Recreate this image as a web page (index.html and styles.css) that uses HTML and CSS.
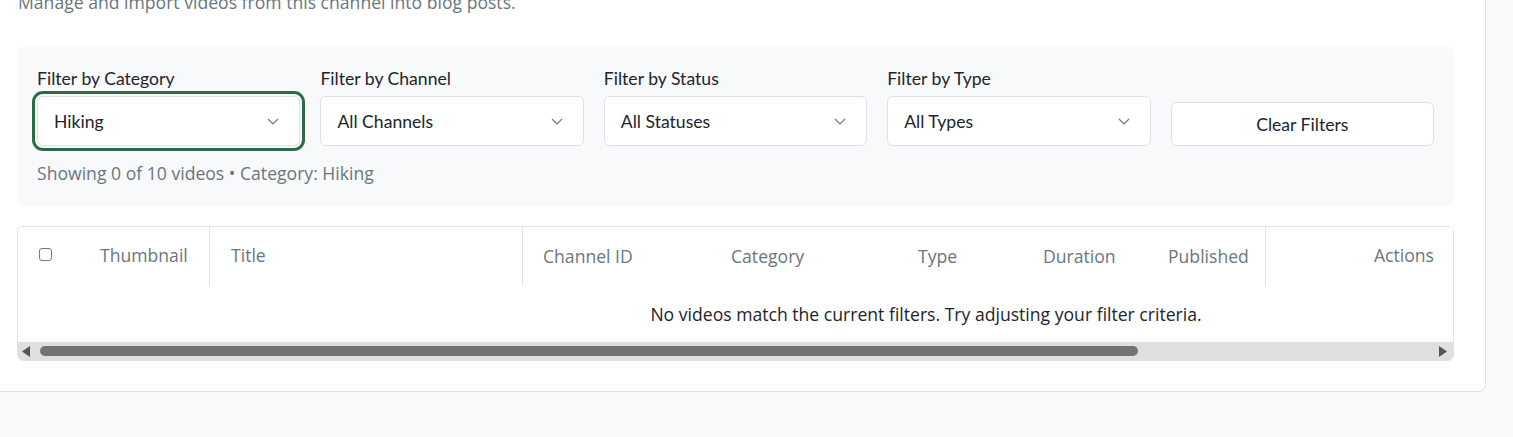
FILE: index.html
```html
<!DOCTYPE html>
<html lang="en">
<head>
<meta charset="utf-8">
<title>Channel Videos</title>
<link rel="stylesheet" href="styles.css">
</head>
<body>
<div class="card">
  <p class="subtitle">Manage and import videos from this channel into blog posts.</p>

  <div class="filters">
    <div class="filter-grid">
      <div class="field">
        <label class="label">Filter by Category</label>
        <div class="select focused"><span>Hiking</span><svg class="chev" viewBox="0 0 12 7" width="12" height="7"><path d="M1 1l5 5 5-5" fill="none" stroke="#777" stroke-width="1.2"/></svg></div>
      </div>
      <div class="field">
        <label class="label">Filter by Channel</label>
        <div class="select"><span>All Channels</span><svg class="chev" viewBox="0 0 12 7" width="12" height="7"><path d="M1 1l5 5 5-5" fill="none" stroke="#777" stroke-width="1.2"/></svg></div>
      </div>
      <div class="field">
        <label class="label">Filter by Status</label>
        <div class="select"><span>All Statuses</span><svg class="chev" viewBox="0 0 12 7" width="12" height="7"><path d="M1 1l5 5 5-5" fill="none" stroke="#777" stroke-width="1.2"/></svg></div>
      </div>
      <div class="field">
        <label class="label">Filter by Type</label>
        <div class="select"><span>All Types</span><svg class="chev" viewBox="0 0 12 7" width="12" height="7"><path d="M1 1l5 5 5-5" fill="none" stroke="#777" stroke-width="1.2"/></svg></div>
      </div>
      <div class="field field-btn">
        <button class="btn">Clear Filters</button>
      </div>
    </div>
    <p class="summary">Showing 0 of 10 videos • Category: Hiking</p>
  </div>

  <div class="table-wrap">
    <div class="table-scroll">
      <table class="tbl">
        <thead>
          <tr>
            <th class="c-cb"><span class="cb"></span></th>
            <th class="c-thumb">Thumbnail</th>
            <th class="c-title">Title</th>
            <th class="c-chan low">Channel ID</th>
            <th class="c-cat low">Category</th>
            <th class="c-type low">Type</th>
            <th class="c-dur low">Duration</th>
            <th class="c-pub low">Published</th>
            <th class="c-act">Actions</th>
          </tr>
        </thead>
        <tbody>
          <tr>
            <td class="empty" colspan="9">No videos match the current filters. Try adjusting your filter criteria.</td>
          </tr>
        </tbody>
      </table>
    </div>
    <div class="hscroll">
      <svg class="arrow" viewBox="0 0 8 11" width="8" height="11"><path d="M8 0L0 5.5 8 11z" fill="#555"/></svg>
      <div class="hthumb"></div>
      <svg class="arrow arrow-r" viewBox="0 0 8 11" width="8" height="11"><path d="M0 0l8 5.5L0 11z" fill="#555"/></svg>
    </div>
  </div>
</div>
</body>
</html>
```
FILE: styles.css
```css
* { box-sizing: border-box; }

html, body {
  margin: 0;
  padding: 0;
}

body {
  background: #f8f9fa;
  font-family: "Open Sans", "Liberation Sans", sans-serif;
  font-size: 17.6px;
  color: #212529;
  height: 437px;
  overflow: hidden;
}

.card {
  width: 1486px;
  margin-top: -11px;
  background: #fff;
  border: 1px solid #dee2e6;
  border-top: none;
  border-left: none;
  border-radius: 0 0 8px 0;
  padding: 0 31px 30px 17px;
}

.subtitle {
  margin: 0 0 31px 1px;
  font-size: 17.6px;
  line-height: 26px;
  color: #6c757d;
}

.filters {
  background: #f8f9fa;
  border-radius: 8px;
  padding: 20px;
  margin-bottom: 20px;
}

.filter-grid {
  display: grid;
  grid-template-columns: repeat(5, 1fr);
  column-gap: 20px;
  align-items: end;
}

.field {
  display: flex;
  flex-direction: column;
}

.label {
  font-family: Lato, "Open Sans", sans-serif;
  font-size: 17.6px;
  line-height: 26px;
  color: #212529;
  margin-bottom: 4px;
}

.select {
  height: 50px;
  display: flex;
  align-items: center;
  justify-content: space-between;
  padding: 0 20px 0 16px;
  background: #fff;
  border: 1px solid #dee2e6;
  border-radius: 6px;
  font-family: Lato, "Open Sans", sans-serif;
  font-size: 17.6px;
  color: #212529;
}

.select.focused {
  outline: 3px solid #2c6b47;
  outline-offset: 2px;
}

.chev { display: block; }

.field-btn { justify-content: flex-end; }

.btn {
  height: 44px;
  background: #fff;
  border: 1px solid #dee2e6;
  border-radius: 6px;
  font-family: Lato, "Open Sans", sans-serif;
  font-size: 17.6px;
  color: #212529;
  padding: 0 12px;
}

.summary {
  margin: 14px 0 0 0;
  font-size: 17.6px;
  line-height: 26px;
  color: #6c757d;
}

.table-wrap {
  border: 1px solid #dee2e6;
  border-radius: 6px;
  overflow: hidden;
  background: #fff;
}

.table-scroll {
  overflow: hidden;
}

.tbl {
  width: 1816px;
  border-collapse: separate;
  border-spacing: 0;
  table-layout: fixed;
}

.tbl th {
  height: 59px;
  font-weight: 400;
  font-size: 17.6px;
  color: #6c757d;
  text-align: left;
  padding: 0 20px 4px 20px;
  white-space: nowrap;
  background: #fff;
  vertical-align: middle;
}

.tbl th.low { padding-top: 2px; }

.c-cb { width: 62px; padding: 0 0 4px 21px !important; }
.c-thumb { width: 130px; border-right: 1px solid #dee2e6; }
.c-title { width: 313px; padding-left: 21px !important; border-right: 1px solid #dee2e6; }
.c-chan { width: 188px; }
.c-cat { width: 187px; }
.c-type { width: 125px; }
.c-dur { width: 125px; }
.c-pub { width: 498px; }
.c-act {
  width: 188px;
  text-align: right !important;
  position: sticky;
  right: 0;
  padding-right: 19px !important;
  border-left: 1px solid #dee2e6;
}

.cb {
  display: inline-block;
  width: 13px;
  height: 13px;
  border: 1px solid #767676;
  border-radius: 3px;
  background: #fff;
  position: relative;
  top: -1px;
}

.tbl td.empty {
  height: 56px;
  text-align: center;
  font-size: 17.6px;
  color: #212529;
  vertical-align: middle;
  padding: 0;
}

.hscroll {
  height: 18px;
  background: #dfdfdf;
  display: flex;
  align-items: center;
  padding: 0 6px 0 4px;
}

.arrow { display: block; flex: none; }

.hthumb {
  flex: none;
  width: 1098px;
  height: 10px;
  margin-left: 10px;
  border-radius: 5px;
  background: #737373;
}

.arrow-r { margin-left: auto; }
```
